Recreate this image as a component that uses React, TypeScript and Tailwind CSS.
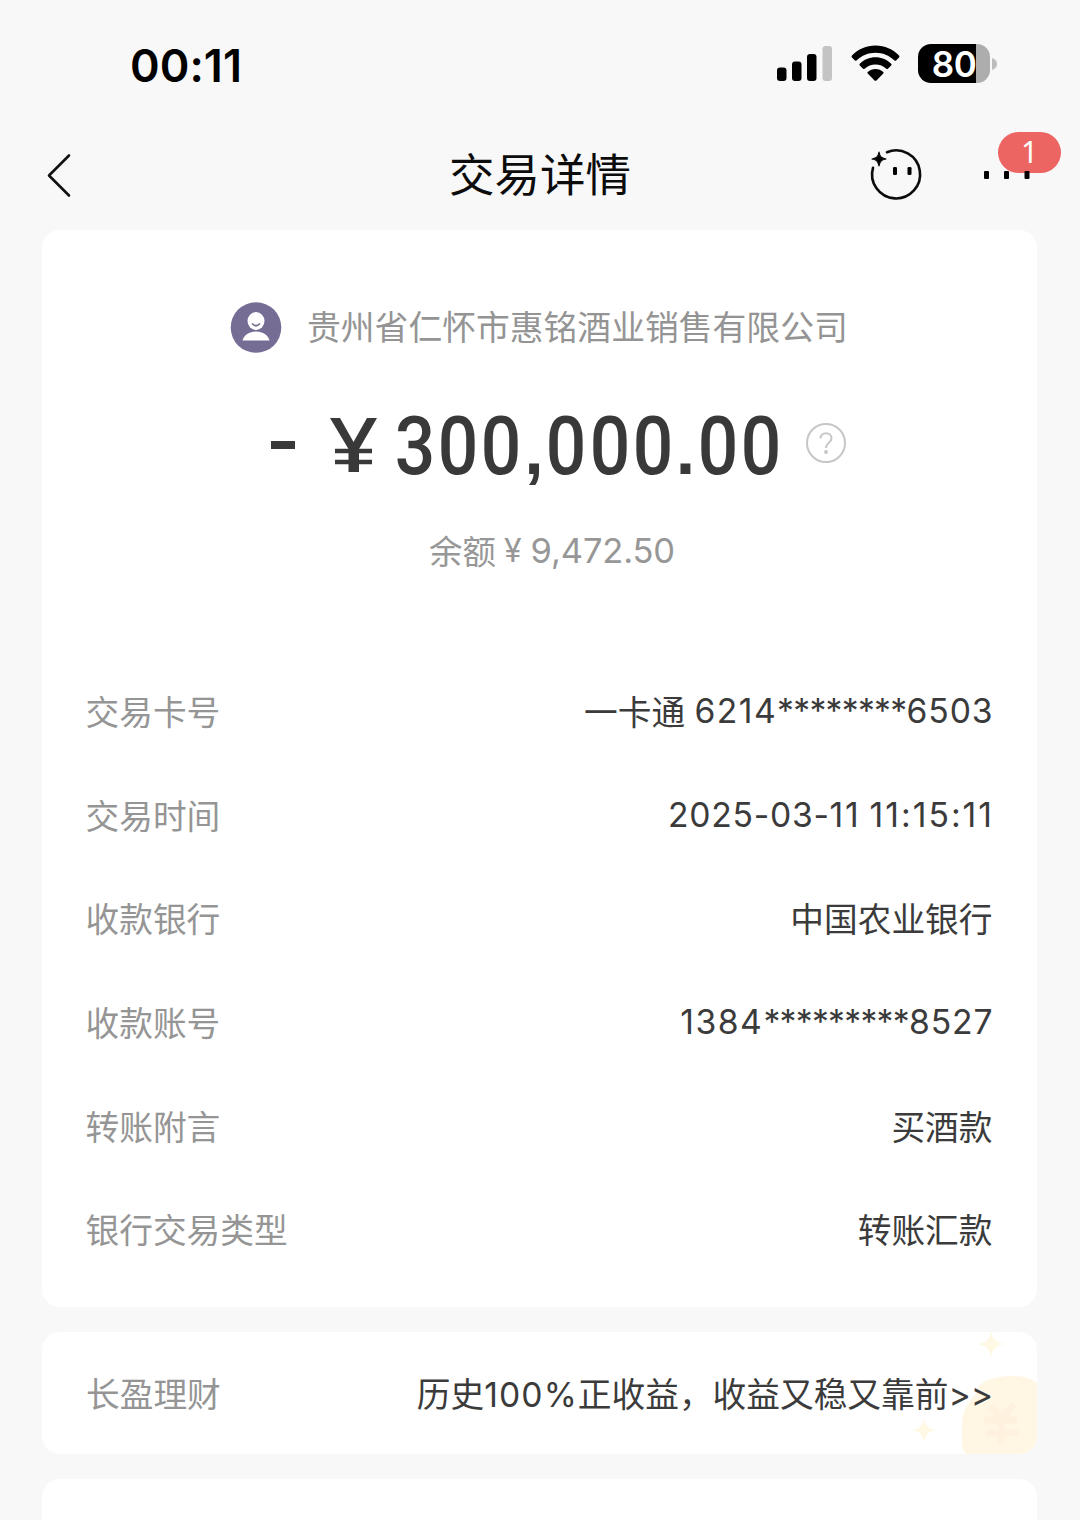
import React from 'react';

const cjk = 'relative top-[2px]';

const rows = [
  {
    label: '交易卡号',
    parts: [
      { text: '一卡通 ', cls: cjk },
      { text: '6214', cls: 'tracking-[1.400px]' },
      { text: '********', cls: 'tracking-[-0.700px]' },
      { text: '6503', cls: 'tracking-[0.900px] -mr-px' },
    ],
  },
  {
    label: '交易时间',
    parts: [
      { text: '2025-03-', cls: 'tracking-[0.700px]' },
      { text: '11', cls: 'tracking-[1.800px]' },
      { text: ' ', cls: 'tracking-[-0.500px]' },
      { text: '11:15:11', cls: 'tracking-[2px] -mr-[1.500px]' },
    ],
  },
  { label: '收款银行', parts: [{ text: '中国农业银行', cls: cjk }] },
  {
    label: '收款账号',
    parts: [
      { text: '1384', cls: 'tracking-[1.500px]' },
      { text: '*********', cls: 'tracking-[-0.700px]' },
      { text: '8527', cls: 'tracking-[0.900px] -mr-px' },
    ],
  },
  { label: '转账附言', parts: [{ text: '买酒款', cls: cjk }] },
  { label: '银行交易类型', parts: [{ text: '转账汇款', cls: cjk }] },
];

function StatusBar() {
  return (
    <header className="flex h-[120px] items-start justify-between pl-[130px] pr-[82px] text-black">
      <span className="mt-[36px] text-[45px] leading-[60px] font-semibold tracking-[0.050px]">00:11</span>
      <div className="mt-[43px] flex items-start">
        <svg width="56" height="40" viewBox="0 0 56 40">
          <rect x="1" y="24.5" width="9.5" height="13.5" rx="3" />
          <rect x="16" y="18.5" width="9.5" height="19.5" rx="3" />
          <rect x="31" y="11" width="9.5" height="27" rx="3" />
          <rect x="46.5" y="3" width="9.5" height="35" rx="3" fill="#c4c4c4" />
        </svg>
        <svg className="ml-[19px]" width="49" height="40" viewBox="0 0 50 40" preserveAspectRatio="none">
          <path d="M25 2.500C34.500 2.500 42.800 6.300 49 12.500Q50 13.500 49 14.500L46 17.500Q45.200 18.200 44.400 17.500C39 12.500 32.300 9.800 25 9.800S11 12.500 5.600 17.500Q4.800 18.200 4 17.500L1 14.500Q0 13.500 1 12.500C7.200 6.300 15.500 2.500 25 2.500Z" />
          <path d="M25 14.300C31.200 14.300 36.800 16.700 41 20.700Q41.900 21.600 41 22.500L37.700 25.700Q36.900 26.400 36.100 25.700C33.100 22.900 29.200 21.400 25 21.400S16.900 22.900 13.900 25.700Q13.100 26.400 12.300 25.700L9 22.500Q8.100 21.600 9 20.700C13.200 16.700 18.800 14.300 25 14.300Z" />
          <path d="M25 26C28 26 30.700 27.100 32.900 28.900Q33.800 29.700 32.900 30.600L26 37.400Q25 38.300 24 37.400L17.100 30.600Q16.200 29.700 17.100 28.900C19.300 27.100 22 26 25 26Z" />
        </svg>
        <div className="ml-[18px] mt-px mr-px flex items-center">
          <div className="flex h-[39px] w-[72px] items-center justify-center rounded-[13px] bg-linear-to-r from-black from-[80%] to-[#adadad] to-[80%] pt-px text-[35px] leading-none font-semibold tracking-[-0.400px] text-white">
            80
          </div>
          <svg className="ml-[2px]" width="5" height="12" viewBox="0 0 5 12">
            <path d="M0 0C3 1 5 3 5 6S3 11 0 12Z" fill="#bdbdbd" />
          </svg>
        </div>
      </div>
    </header>
  );
}

function NavBar() {
  return (
    <nav className="grid h-[110px] grid-cols-[1fr_auto_1fr] items-center px-[46px]">
      <svg width="28" height="46" viewBox="0 0 28 46" fill="none" stroke="#111" strokeWidth="2.600" strokeLinecap="round" strokeLinejoin="round">
        <path d="M23 3.500L3 23.500l20 20" />
      </svg>
      <h1 className="pt-[2px] text-[45.500px] leading-none text-[#0c0c0c]">交易详情</h1>
      <div className="-mr-[27px] flex items-center justify-end pb-[2px]">
        <svg width="56" height="56" viewBox="0 0 56 56">
          <path d="M19 6.200A24 24 0 1 1 5 21.800" fill="none" stroke="#0c0c0c" strokeWidth="2.600" strokeLinecap="round" />
          <path d="M11 6C12 11 13 12 18 13C13 14 12 15 11 20C10 15 9 14 4 13C9 12 10 11 11 6Z" stroke="#0c0c0c" strokeWidth="1.200" strokeLinejoin="round" />
          <rect x="25" y="21" width="4" height="8" rx="1.300" />
          <rect x="39.500" y="21" width="4" height="8" rx="1.300" />
        </svg>
        <div className="relative ml-[58px] h-[56px] w-[79px]">
          <span className="absolute right-0 -top-[14px] flex h-[41px] w-[63px] items-center justify-center rounded-full bg-[#ec6562] pb-[2px] font-['Noto_Sans'] text-[30px] leading-none text-white">
            1
          </span>
          <svg className="absolute left-0 top-0" width="56" height="56" viewBox="0 0 56 56">
            <rect x="2" y="25" width="5" height="8" rx="1" />
            <rect x="22" y="25" width="5" height="8" rx="1" />
            <rect x="42.500" y="25" width="5" height="8" rx="1" />
          </svg>
        </div>
      </div>
    </nav>
  );
}

function AmountGlyph({ c }: { c: string }) {
  if (c === ',' || c === '.') {
    return (
      <span className="flex w-[21.500px] justify-center font-['Liberation_Sans'] text-[70px] font-bold">{c}</span>
    );
  }
  return (
    <span className="flex w-[43.400px] justify-center">
      <span className="block scale-x-[0.880]">{c}</span>
    </span>
  );
}

function Amount() {
  return (
    <div className="mt-[42px] flex h-[96px] items-center pl-[229px] font-[Roboto] text-[81px] leading-[96px] font-medium text-[#393939]">
      <span className="mt-[4px] h-[8px] w-[24px] bg-[#393939]" />
      <svg className="ml-[34px] mt-[3px]" width="50" height="56" viewBox="0 0 50 56">
        <path d="M1 1H11L24.500 25L38 1H48L30 32V55H19.500V32Z" fill="#393939" />
        <path d="M6 34H43M6 45H43" fill="none" stroke="#393939" strokeWidth="4.600" />
      </svg>
      <div className="ml-[14px] flex items-baseline pt-[10px]">
        {'300,000.00'.split('').map((c, i) => (
          <AmountGlyph key={i} c={c} />
        ))}
      </div>
      <svg className="ml-[22px]" width="42" height="42" viewBox="0 0 42 42" fill="none" stroke="#c6c6c6" strokeWidth="2">
        <circle cx="21" cy="21" r="19" />
        <path d="M15.500 16.500C15.500 9.500 26.500 9.500 26.500 16.500C26.500 20.500 21 20.500 21 26" />
        <circle cx="21" cy="30" r="1" />
      </svg>
    </div>
  );
}

export default function App() {
  return (
    <div className="h-[1520px] w-[1080px] overflow-hidden bg-[#f8f8f8] font-[Inter,'Noto_Sans_CJK_SC',sans-serif] text-[33.700px]">
      <StatusBar />
      <NavBar />
      <main className="flex flex-col gap-[25px] px-[42px]">
        <section className="h-[1077px] w-[995px] rounded-[18px] bg-white pt-[71px]">
          <div className="flex items-center pl-[188px]">
            <svg width="52" height="52" viewBox="0 0 52 52">
              <circle cx="26" cy="26.500" r="25.300" fill="#756d94" />
              <ellipse cx="26" cy="20" rx="8.500" ry="9" fill="#fff" />
              <path d="M12.500 39.500C14 34 19 30.500 26 30.500S38 34 39.500 39.500Z" fill="#fff" />
              <path d="M22.500 23Q26 26.500 29.500 23" fill="none" stroke="#756d94" strokeWidth="1.700" strokeLinecap="round" />
            </svg>
            <p className="relative top-px ml-[25px] text-[33.800px] leading-[52px] text-[#949494]">贵州省仁怀市惠铭酒业销售有限公司</p>
          </div>
          <Amount />
          <p className="mt-[34px] flex h-[52px] items-center pl-[387px] text-[34.500px] text-[#979797]">
            <span className="relative top-px text-[33.500px]">余额</span>
            <span className="ml-[8px] text-[32px]">¥</span>
            <span className="ml-[9px] tracking-[-0.150px]">9,472.50</span>
          </p>
          <dl className="mt-[82px] pl-[43.500px] pr-[44.500px]">
            {rows.map((r) => (
              <div key={r.label} className="flex h-[103.700px] items-center justify-between leading-[50px]">
                <dt className="relative top-[2px] text-[#959595]">{r.label}</dt>
                <dd className="whitespace-pre text-[#3b3b3b]">
                  {r.parts.map((p, i) => (
                    <span key={i} className={p.cls}>
                      {p.text}
                    </span>
                  ))}
                </dd>
              </div>
            ))}
          </dl>
        </section>

        <section className="relative flex h-[122px] w-[995px] items-center justify-between overflow-hidden rounded-[18px] bg-white pl-[44px] pr-[44px] pt-[5px]">
          <svg className="absolute bottom-0 right-0" width="135" height="122" viewBox="0 0 135 122">
            <path d="M64 122Q60 118 60 110V94C60 80 66 70 74 62C74 50 92 44 110 44Q126 44 135 51V122Z" fill="#fff6e3" />
            <path d="M76 12Q87 11 89 0Q91 11 103 12Q91 13 89 25Q87 13 76 12Z" fill="#fff8e4" />
            <path d="M10 98Q20 97 22 87Q24 97 34 98Q24 99 22 110Q20 99 10 98Z" fill="#fff8e4" />
            <path d="M88 74L100 87L112 72M82 88H115M84 101H116M99 86V113" fill="none" stroke="#fef1de" strokeWidth="7" />
          </svg>
          <span className="relative text-[#959595]">长盈理财</span>
          <span className="relative text-[#3b3b3b]">
            历史<span className="tracking-[1.100px]">100%</span>正收益，收益又稳又靠前&gt;&gt;
          </span>
        </section>

        <section className="h-[120px] w-[995px] rounded-[18px] bg-white" />
      </main>
    </div>
  );
}
